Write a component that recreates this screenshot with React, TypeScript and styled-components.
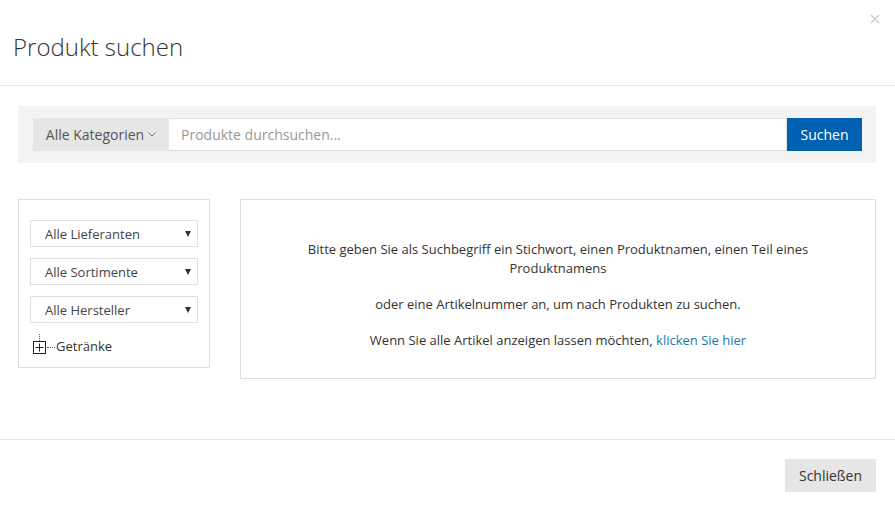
import React from 'react';
import styled, { createGlobalStyle } from 'styled-components';

const GlobalStyle = createGlobalStyle`
  html, body {
    margin: 0;
    padding: 0;
    background: #fff;
    font-family: 'Open Sans', 'Liberation Sans', sans-serif;
    color: #333;
  }
  * { box-sizing: border-box; }
`;

const Modal = styled.div`
  width: 895px;
  height: 512px;
  background: #fff;
  display: flex;
  flex-direction: column;
`;

const Header = styled.div`
  position: relative;
  height: 86px;
  border-bottom: 1px solid #e5e5e5;
  padding: 32px 13px 0;
`;

const Title = styled.h4`
  margin: 0;
  font-size: 24px;
  font-weight: 300;
  line-height: 30px;
  color: #333;
`;

const CloseX = styled.button`
  position: absolute;
  top: 13px;
  right: 13px;
  width: 12px;
  height: 12px;
  padding: 0;
  border: 0;
  background: transparent;
  cursor: pointer;
  svg {
    display: block;
    stroke: #c8c8c8;
  }
`;

const Body = styled.div`
  padding: 20px 19px 60px 18px;
  border-bottom: 1px solid #e5e5e5;
`;

const SearchBar = styled.div`
  background: #f3f3f3;
  padding: 12px 14px 12px 15px;
  display: flex;
  height: 57px;
`;

const CategoryButton = styled.button`
  width: 136px;
  height: 33px;
  border: 0;
  background: #e6e6e6;
  font-family: inherit;
  font-size: 14px;
  color: #555;
  display: flex;
  align-items: center;
  justify-content: center;
  gap: 4px;
  padding: 0 8px;
  cursor: pointer;
  svg {
    stroke: #777;
  }
`;

const SearchInput = styled.input`
  flex: 1;
  height: 33px;
  border: 1px solid #e2e2e2;
  border-left: 0;
  padding: 0 12px;
  font-family: inherit;
  font-size: 14px;
  color: #333;
  outline: none;
  &::placeholder {
    color: #999;
  }
`;

const PrimaryButton = styled.button`
  width: 75px;
  height: 33px;
  border: 0;
  background: #0061b0;
  color: #fff;
  font-family: inherit;
  font-size: 14px;
  cursor: pointer;
`;

const Content = styled.div`
  display: flex;
  align-items: flex-start;
  gap: 30px;
  margin-top: 36px;
`;

const FilterPanel = styled.div`
  width: 192px;
  height: 169px;
  border: 1px solid #dedede;
  padding: 20px 11px 0;
  display: flex;
  flex-direction: column;
  gap: 11px;
`;

const Select = styled.div`
  height: 27px;
  border: 1px solid #e0e0e0;
  display: flex;
  align-items: center;
  justify-content: space-between;
  padding: 0 6px 0 14px;
  font-size: 13px;
  color: #444;
`;

const Caret = styled.span`
  width: 0;
  height: 0;
  border-left: 3px solid transparent;
  border-right: 3px solid transparent;
  border-top: 6px solid #333;
`;

const TreeItem = styled.div`
  display: flex;
  align-items: center;
  padding-left: 3px;
  font-size: 13px;
  color: #333;
  height: 20px;
`;

const TreeToggle = styled.span`
  position: relative;
  width: 13px;
  height: 13px;
  margin-top: 6px;
  border: 1px solid #222;
  display: flex;
  align-items: center;
  justify-content: center;
  &::before {
    content: '';
    position: absolute;
    left: 5px;
    top: -8px;
    height: 7px;
    border-left: 1px dotted #555;
  }
  svg {
    display: block;
    stroke: #222;
  }
`;

const TreeLine = styled.span`
  width: 8px;
  margin: 6px 1px 0;
  border-top: 1px dotted #555;
`;

const TreeLabel = styled.span`
  margin-top: 4px;
`;

const InfoPanel = styled.div`
  flex: 1;
  height: 180px;
  border: 1px solid #dedede;
  padding: 40px 0 0;
  text-align: center;
  font-size: 13px;
  line-height: 19px;
  color: #333;
`;

const Para = styled.p`
  max-width: 530px;
  margin: 0 auto 17px;
`;

const Link = styled.a`
  color: #2378ad;
  text-decoration: none;
`;

const Footer = styled.div`
  display: flex;
  justify-content: flex-end;
  padding: 19px 19px 0;
`;

const DefaultButton = styled.button`
  width: 91px;
  height: 33px;
  border: 0;
  background: #e6e6e6;
  color: #333;
  font-family: inherit;
  font-size: 14px;
  cursor: pointer;
`;

const filters = ['Alle Lieferanten', 'Alle Sortimente', 'Alle Hersteller'];

export default function App() {
  return (
    <>
      <GlobalStyle />
      <Modal>
        <Header>
          <Title>Produkt suchen</Title>
          <CloseX aria-label="Schließen">
            <svg width="10" height="10" viewBox="0 0 10 10" strokeWidth="1.2">
              <path d="M1 1L9 9M9 1L1 9" />
            </svg>
          </CloseX>
        </Header>
        <Body>
          <SearchBar>
            <CategoryButton>
              Alle Kategorien
              <svg width="8" height="5" viewBox="0 0 8 5" fill="none" strokeWidth="1">
                <path d="M0.5 0.5L4 4L7.5 0.5" />
              </svg>
            </CategoryButton>
            <SearchInput placeholder="Produkte durchsuchen..." />
            <PrimaryButton>Suchen</PrimaryButton>
          </SearchBar>
          <Content>
            <FilterPanel>
              {filters.map((f) => (
                <Select key={f}>
                  <span>{f}</span>
                  <Caret />
                </Select>
              ))}
              <TreeItem>
                <TreeToggle>
                  <svg width="9" height="9" viewBox="0 0 9 9" strokeWidth="1">
                    <path d="M0.5 4.5H8.5M4.5 0.5V8.5" />
                  </svg>
                </TreeToggle>
                <TreeLine />
                <TreeLabel>Getränke</TreeLabel>
              </TreeItem>
            </FilterPanel>
            <InfoPanel>
              <Para>
                Bitte geben Sie als Suchbegriff ein Stichwort, einen Produktnamen, einen Teil eines Produktnamens
              </Para>
              <Para>oder eine Artikelnummer an, um nach Produkten zu suchen.</Para>
              <Para>
                Wenn Sie alle Artikel anzeigen lassen möchten, <Link href="#">klicken Sie hier</Link>
              </Para>
            </InfoPanel>
          </Content>
        </Body>
        <Footer>
          <DefaultButton>Schließen</DefaultButton>
        </Footer>
      </Modal>
    </>
  );
}
